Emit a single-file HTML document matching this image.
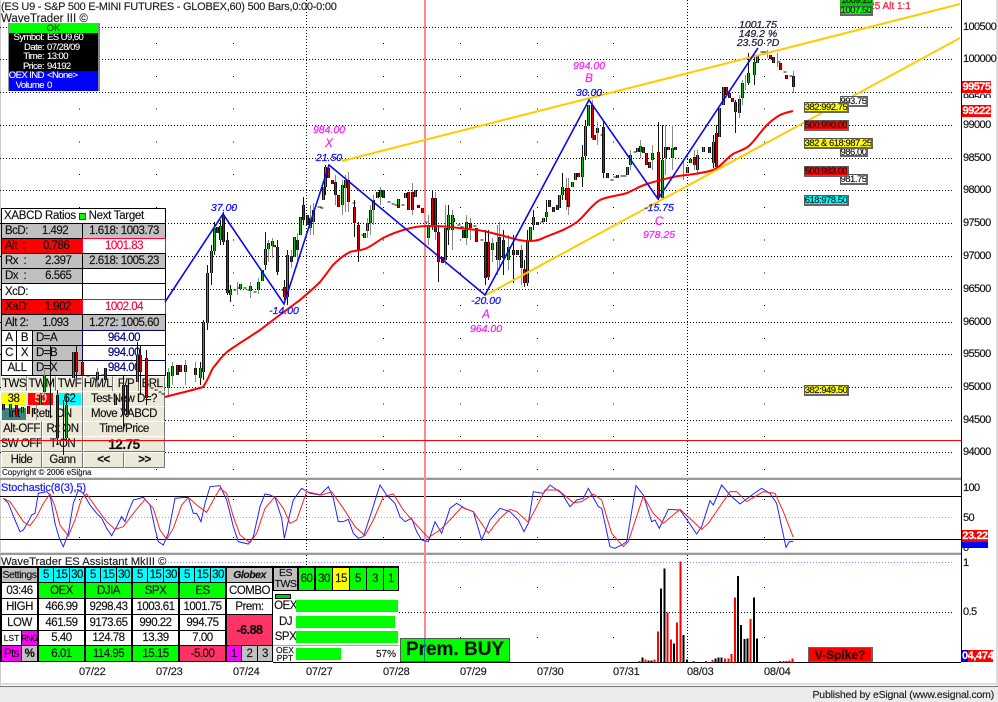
<!DOCTYPE html>
<html><head><meta charset="utf-8"><style>
html,body{margin:0;padding:0;background:#fff}
#p{position:relative;width:998px;height:702px;overflow:hidden;background:#fff;font-family:"Liberation Sans",sans-serif;color:#111}
svg{position:absolute;left:0;top:0}
.c,.t{position:absolute;white-space:nowrap;overflow:hidden}
.c{display:flex;align-items:center;justify-content:center;box-sizing:border-box;font-size:11.5px;letter-spacing:-.5px;-webkit-text-stroke:.15px currentColor}
.b{border:1px solid #000}
.g{background:#c0c0c0}
.w{background:#fff}
.btn{background:#ece9d8;border-top:1px solid #fff;border-left:1px solid #fff;border-right:1px solid #777;border-bottom:1px solid #777;font-size:11.5px}
.t{overflow:visible;line-height:12px;font-size:10.5px;transform:translateX(-50%);font-style:italic;-webkit-text-stroke:.25px currentColor}
.m{color:#ff20ff}.bl{color:#1010ff}
.l{font-size:9.5px;letter-spacing:-.5px;border:1px solid #555;border-right:2px solid #666;border-bottom:2px solid #666;color:#111}
.a{position:absolute;left:963px;font-size:11px;letter-spacing:-.6px;line-height:12px;-webkit-text-stroke:.15px #111}
.d{position:absolute;font-size:11px;top:666px;letter-spacing:-.2px;line-height:12px;color:#222;-webkit-text-stroke:.2px #222}
.pop{position:absolute;font-size:9.5px;letter-spacing:-.55px;line-height:10px;color:#fff;white-space:pre;-webkit-text-stroke:.1px #fff}
</style></head><body><div id="p">
<svg width="998" height="702" style="shape-rendering:crispEdges">
<rect x="0" y="0" width="1" height="702" fill="#ccc"/>
<g stroke="#000" stroke-dasharray="1 2" stroke-width="1" fill="none">
<path d="M0 27.5H953M0 59.5H953M0 92.5H953M0 125.5H953M0 158.5H953M0 190.5H953M0 223.5H953M0 256.5H953M0 289.5H953M0 322.5H953M0 354.5H953M0 387.5H953M0 420.5H953M0 452.5H953M399 612.5H953"/>
<path d="M306.5 0V662M687.5 0V662"/>
</g>
<g stroke="#000" stroke-dasharray="1 31.75" fill="none">
<path d="M79.5 43V470M156.5 43V470M233.5 43V470M383.5 43V470M460.5 43V470M537.5 43V470M613.5 43V470M764.5 43V470"/>
</g>
<g stroke="#000" stroke-dasharray="1 37" fill="none">
<path d="M79.5 499V540M156.5 499V540M233.5 499V540M383.5 499V540M460.5 499V540M537.5 499V540M613.5 499V540M764.5 499V540"/>
</g>
<g stroke="#000" stroke-dasharray="1 49" fill="none">
<path d="M233.5 587V640M383.5 587V640M460.5 587V640M537.5 587V640M613.5 587V640M764.5 587V640"/>
</g>
<path d="M165 562.5H953" stroke="#8888ff" stroke-dasharray="1 2"/>
<path d="M0 517.5H953" stroke="#aaa" stroke-dasharray="1 2"/>
<path d="M0 496.5H961M0 539.5H961" stroke="#000"/>
<rect x="0" y="477" width="961" height="1" fill="#ddd"/><rect x="0" y="478" width="961" height="2" fill="#999"/>
<rect x="0" y="552" width="961" height="1" fill="#ddd"/><rect x="0" y="553" width="961" height="2" fill="#999"/>
<path d="M399 662.5H961M961.5 0V662" stroke="#000"/>
<rect x="424" y="0" width="2" height="662" fill="#ff8888"/>
<rect x="0" y="683" width="998" height="2" fill="#ddd"/><rect x="0" y="686" width="998" height="1" fill="#777"/><rect x="0" y="687" width="998" height="15" fill="#ececec"/>
<rect x="996" y="0" width="2" height="686" fill="#ddd"/>
</svg>
<svg width="998" height="702">
<g transform="translate(0,470) scale(.33333)" fill="none" stroke-width="3">
<path stroke="#2424ff" d="M10 85L25 100 45 150 60 185 70 180 85 155 95 135 105 130 115 70 140 65 150 75 165 160 178 205 190 230 205 190 220 100 235 60 250 70 270 105 290 130 305 145 320 175 335 197 350 170 365 140 375 155 385 125 400 90 430 82 450 105 465 175 475 215 490 225 505 190 525 85 545 83 565 82 580 130 590 130 603 155 615 100 630 50 660 47 680 90 700 170 715 215 745 222 760 200 780 110 795 72 810 75 825 82 845 145 853 205 870 130 880 90 905 55 930 70 960 75 985 50 1000 85 1015 155 1030 155 1045 148 1060 190 1075 205 1090 200 1110 140 1140 45 1160 75 1185 100 1200 140 1215 155 1235 145 1250 185 1265 210 1285 215 1305 155 1325 190 1350 115 1370 100 1395 115 1420 125 1445 210 1470 150 1500 115 1530 125 1555 150 1572 185 1585 160 1600 65 1630 70 1650 45 1685 70 1710 110 1730 90 1750 85 1765 55 1795 110 1805 115 1830 230 1845 235 1865 225 1880 215 1908 47 1930 75 1955 155 1965 150 1978 175 2005 118 2040 120 2065 155 2090 192 2105 170 2130 92 2140 105 2165 45 2190 75 2220 102 2260 72 2285 55 2310 70 2330 100 2358 232 2368 215 2380 215"/>
<path stroke="#ff2020" d="M10 85L30 95 50 125 70 155 90 167 110 140 130 100 150 72 165 110 180 165 205 198 225 150 245 85 260 72 290 115 320 155 345 178 370 170 400 130 435 88 460 115 480 180 500 208 520 175 545 105 565 82 590 105 620 127 640 90 660 55 680 70 700 140 720 195 750 218 770 190 795 115 825 80 850 115 870 160 890 150 920 65 965 75 995 65 1030 115 1065 170 1095 197 1120 150 1150 80 1180 72 1210 120 1245 160 1285 203 1320 180 1350 150 1385 112 1420 125 1465 190 1500 145 1530 118 1550 125 1585 157 1610 110 1635 60 1675 60 1720 98 1745 95 1780 72 1805 90 1835 190 1870 230 1885 215 1930 78 1960 130 1990 160 2040 118 2105 178 2125 160 2190 65 2210 65 2240 95 2290 65 2325 70 2350 125 2380 202"/>
</g>
<g transform="translate(500,470) scale(.33333)" fill="none" stroke-width="6" style="shape-rendering:crispEdges">
<path stroke="#ff0000" d="M418 577V573M436 577V569M464 577V568M474 577V484M503 577V428M513 577V508M531 577V457M541 577V275M580 577V573M618 577V573M637 577V570M675 577V565M685 577V565M695 577V552M705 577V382M752 577V447M840 577V573M850 577V573M860 577V573M868 577V572M877 577V565"/>
<path stroke="#000" d="M427 577V563M445 577V571M454 577V571M483 577V355M493 577V295M522 577V520M551 577V495M561 577V568M647 577V565M655 577V562M665 577V563M714 577V318M723 577V465M733 577V507M743 577V505M762 577V382M771 577V505"/>
</g>
</svg>

<div class="c" style="left:1px;top:0;font-size:11px;letter-spacing:-.25px;height:13px;justify-content:flex-start;width:345px;color:#222">(ES U9 - S&amp;P 500 E-MINI FUTURES - GLOBEX,60) 500 Bars,0:00-0:00</div>
<div class="c" style="left:1px;top:12px;font-size:11.5px;letter-spacing:0;height:14px;justify-content:flex-start;width:90px;color:#222">WaveTrader III ©</div>
<div class="c" style="left:1px;top:481px;font-size:11px;letter-spacing:-.1px;height:14px;justify-content:flex-start;width:90px;color:#2424ff;-webkit-text-stroke:.25px #2424ff">Stochastic(8(3),5)</div>
<div class="c" style="left:1px;top:556px;font-size:11.2px;letter-spacing:0;height:11px;justify-content:flex-start;width:168px;color:#222;align-items:flex-start">WaveTrader ES Assistant MkIII ©</div>

<!-- popup -->
<div style="position:absolute;left:8px;top:23px;width:92px;height:68px;background:#000;border:1px solid #999;border-right:2px solid #888;border-bottom:2px solid #888;box-sizing:border-box">
<div style="position:absolute;left:0;top:0;right:0;height:9px;background:#00ff00;color:#111;font-size:9.5px;line-height:9px;text-align:center;overflow:hidden">OK</div>
<div style="position:absolute;left:0;top:47px;right:0;height:20px;background:#0000ff"></div>
</div>
<div class="pop" style="left:0;top:33px;width:44px;text-align:right">Symbol:</div><div class="pop" style="left:47px;top:33px">ES U9,60</div>
<div class="pop" style="left:0;top:43px;width:44px;text-align:right">Date:</div><div class="pop" style="left:47px;top:43px">07/28/09</div>
<div class="pop" style="left:0;top:52px;width:44px;text-align:right">Time:</div><div class="pop" style="left:47px;top:52px">13:00</div>
<div class="pop" style="left:0;top:62px;width:44px;text-align:right">Price:</div><div class="pop" style="left:47px;top:62px">94192</div>
<div class="pop" style="left:0;top:71px;width:44px;text-align:right">OEX IND</div><div class="pop" style="left:47px;top:71px">&lt;None&gt;</div>
<div class="pop" style="left:0;top:81px;width:44px;text-align:right">Volume</div><div class="pop" style="left:47px;top:81px">0</div>

<!-- left panel -->
<div class="c b w" style="left:1px;top:208px;width:165px;height:16px;justify-content:flex-start;padding-left:2px;font-size:11.5px;letter-spacing:-.3px">XABCD Ratios&nbsp;<span style="display:inline-block;width:5px;height:5px;background:#00ff00;border:1px solid #060"></span>&nbsp;Next Target</div>
<div class="c g b" style="left:1px;top:223px;width:82px;height:16px;justify-content:flex-start;padding-left:3px;word-spacing:0">BcD:<span style="margin-left:14px">1.492</span></div><div class="c g b" style="left:82px;top:223px;width:84px;height:16px">1.618: 1003.73</div>
<div class="c b" style="left:1px;top:238px;width:82px;height:16px;background:#f00;justify-content:flex-start;padding-left:3px">Alt&nbsp;&nbsp;:<span style="margin-left:18px">0.786</span></div><div class="c w" style="left:82px;top:238px;width:84px;height:16px;border:1px solid #f03;color:#ff0040">1001.83</div>
<div class="c g b" style="left:1px;top:253px;width:82px;height:16px;justify-content:flex-start;padding-left:3px">Rx&nbsp;&nbsp;:<span style="margin-left:19px">2.397</span></div><div class="c g b" style="left:82px;top:253px;width:84px;height:16px">2.618: 1005.23</div>
<div class="c g b" style="left:1px;top:268px;width:82px;height:16px;justify-content:flex-start;padding-left:3px">Dx&nbsp;&nbsp;:<span style="margin-left:19px">6.565</span></div><div class="c w b" style="left:82px;top:268px;width:84px;height:16px"></div>
<div class="c w b" style="left:1px;top:283px;width:82px;height:17px;justify-content:flex-start;padding-left:3px">XcD:</div><div class="c w b" style="left:82px;top:283px;width:84px;height:17px"></div>
<div class="c b" style="left:1px;top:299px;width:82px;height:16px;background:#f00;justify-content:flex-start;padding-left:3px">XaD:<span style="margin-left:16px">1.902</span></div><div class="c w" style="left:82px;top:299px;width:84px;height:16px;border:1px solid #f03;color:#ff0040">1002.04</div>
<div class="c g b" style="left:1px;top:314px;width:82px;height:17px;justify-content:flex-start;padding-left:3px">Alt 2:<span style="margin-left:14px">1.093</span></div><div class="c g b" style="left:82px;top:314px;width:84px;height:17px">1.272: 1005.60</div>
<div class="c w b" style="left:1px;top:330px;width:16px;height:16px">A</div><div class="c w b" style="left:16px;top:330px;width:17px;height:16px">B</div><div class="c g b" style="left:32px;top:330px;width:51px;height:16px;justify-content:flex-start;padding-left:3px">D=A</div><div class="c w" style="left:82px;top:330px;width:84px;height:16px;border:1px solid #006;color:#000080">964.00</div>
<div class="c w b" style="left:1px;top:345px;width:16px;height:16px">C</div><div class="c w b" style="left:16px;top:345px;width:17px;height:16px">X</div><div class="c g b" style="left:32px;top:345px;width:51px;height:16px;justify-content:flex-start;padding-left:3px">D=B</div><div class="c w" style="left:82px;top:345px;width:84px;height:16px;border:1px solid #006;color:#000080">994.00</div>
<div class="c w b" style="left:1px;top:360px;width:32px;height:16px">ALL</div><div class="c g b" style="left:32px;top:360px;width:51px;height:16px;justify-content:flex-start;padding-left:3px">D=X</div><div class="c w" style="left:82px;top:360px;width:84px;height:16px;border:1px solid #006;color:#000080">984.00</div>
<div class="c btn" style="left:1px;top:376px;width:26px;height:16px">TWS</div><div class="c btn" style="left:27px;top:376px;width:29px;height:16px">TWM</div><div class="c btn" style="left:56px;top:376px;width:27px;height:16px">TWF</div><div class="c btn" style="left:83px;top:376px;width:30px;height:16px">H/M/L</div><div class="c btn" style="left:113px;top:376px;width:26px;height:16px">F/P</div><div class="c btn" style="left:139px;top:376px;width:26px;height:16px">BRL</div>
<div class="c btn" style="left:0;top:391px;width:83px;height:16px"></div>
<div class="c" style="left:1px;top:393px;width:25px;height:12px;background:#ff0">38</div><div class="c" style="left:28px;top:393px;width:25px;height:12px;background:#f00;color:#fff">50</div><div class="c" style="left:58px;top:393px;width:23px;height:12px;background:#0ff">62</div>
<div class="c btn" style="left:83px;top:391px;width:82px;height:16px">Test New D=?</div>
<div class="c btn" style="left:0;top:406px;width:83px;height:16px;justify-content:flex-start;padding-left:30px">Retr. ON</div><div class="c" style="left:2px;top:408px;width:24px;height:12px;background:#408080;color:#000">Int</div>
<div class="c btn" style="left:83px;top:406px;width:82px;height:16px">Move XABCD</div>
<div class="c btn" style="left:1px;top:421px;width:41px;height:16px">Alt-OFF</div><div class="c btn" style="left:42px;top:421px;width:41px;height:16px">Rx ON</div><div class="c btn" style="left:83px;top:421px;width:82px;height:16px">Time/Price</div>
<div class="c btn" style="left:1px;top:436px;width:41px;height:16px">SW OFF</div><div class="c btn" style="left:42px;top:436px;width:41px;height:16px">T-ON</div><div class="c btn" style="left:83px;top:436px;width:82px;height:16px;font-weight:bold;font-size:13.5px">12.75</div>
<div class="c btn" style="left:1px;top:452px;width:41px;height:16px">Hide</div><div class="c btn" style="left:42px;top:452px;width:41px;height:16px">Gann</div><div class="c btn" style="left:83px;top:452px;width:41px;height:16px;font-weight:bold">&lt;&lt;</div><div class="c btn" style="left:124px;top:452px;width:41px;height:16px;font-weight:bold">&gt;&gt;</div>
<div class="c" style="left:2px;top:468px;width:90px;height:9px;font-size:8px;letter-spacing:0;justify-content:flex-start;color:#222">Copyright © 2006 eSignal</div>

<svg width="998" height="702">
<g fill="none" transform="translate(.5,0)" style="shape-rendering:crispEdges">
<path stroke="#888" d="M36 405V420M44 370V398M97 368V388M168 368V395M172 362V385M185 360V385M195 362V382M237 282V295M250 282V298M258 278V294M268 240V262M272 238V258M291 250V268M297 233V262M310 205V235M313 203V235M335 175V205M342 180V215M345 175V212M348 172V212M367 218V238M370 205V235M373 195V225M380 187V205M412 183V215M428 215V245M435 192V240M445 205V265M452 210V250M466 215V245M470 218V240M492 238V262M497 225V275M499 222V270M508 235V270M521 245V285M566 178V210M568 178V215M592 100V140M597 122V145M630 150V170M640 140V158M652 145V170M665 125V175M672 125V170M683 160V180M694 150V170M697 150V175M739 95V118M742 80V105M745 75V90M793 71V93M777 53V67M767 50V58"/>
<path stroke="#111" d="M50 345V418M57 390V445M63 400V455M66 395V445M76 345V378M123 375V430M137 342V382M140 345V395M146 350V405M200 362V385M203 320V380M207 265V330M211 245V285M214 222V255M220 220V245M223 212V245M227 232V295M230 285V302M265 232V270M277 240V275M284 280V300M287 250V305M303 197V225M325 165V195M354 200V237M358 222V262M432 190V230M438 225V282M448 205V245M485 230V285M488 230V280M503 230V275M513 235V283M524 260V287M527 230V286M533 210V230M546 200V222M562 173V200M582 145V187M585 120V160M603 120V178M658 122V200M662 125V200M713 135V168M716 125V170M735 100V133M748 53V85M754 55V85M86 376h3M91 378h3M101 375h3M109 398h3M150 388h3M154 390h3M158 392h3M161 394h3M233 290h3M237 288h3M243 288h3M247 290h3M253 292h3M281 290h3M317 207h4M320 208h3M352 203h3M361 235h3M387 202h3M391 204h3M394 205h3M401 205h3M425 222h2M457 225h3M460 227h3M473 226h3M480 240h3M540 222h3M600 135h2M610 180h3M613 177h3M620 176h3M623 176h3M633 152h3M760 52h3M763 52h3M767 53h3M777 62h3M783 72h3M789 76h3"/>
<defs>
<path id="gg" d="M10 404V410M22 407V413M33 408V414M40 395V405M44 375V392M66 405V438M73 352V378M97 372V380M115 395V405M137 355V382M168 372V388M172 366V376M185 365V372M200 368V378M203 322V372M207 273V323M211 251V273M214 228V251M220 226V240M230 290V295M240 284V289M250 286V291M258 282V290M262 270V281M265 249V265M268 243V249M272 241V246M287 255V297M294 237V257M300 217V235M310 218V228M313 210V222M323 187V200M325 167V187M342 185V205M345 180V188M364 233V238M367 223V231M370 210V223M373 200V210M377 192V198M380 190V197M398 199V206M405 193V198M415 190V197M428 225V238M445 228V260M448 215V230M452 215V230M466 222V238M492 243V250M497 242V260M508 247V260M527 240V283M530 227V240M533 217V225M543 218V222M546 212V217M559 195V208M562 187V195M572 182V187M575 173V180M582 157V177M585 126V156M588 105V126M597 128V133M617 175V178M627 167V175M630 155V165M637 148V152M640 146V152M652 153V160M662 160V198M665 147V158M672 148V158M687 167V173M690 159V163M697 155V170M703 147V152M713 142V163M719 108V137M723 87V105M739 99V113M742 83V98M748 73V83M754 62V75M757 55V63"/>
<path id="rr" d="M3 404V410M16 405V415M28 406V414M57 395V438M76 352V372M82 362V375M105 368V380M123 385V415M127 385V415M140 355V372M146 358V398M177 365V375M180 365V372M195 368V375M217 227V233M223 215V242M227 240V293M274 245V247M277 247V272M284 287V297M291 256V262M297 240V250M303 205V220M307 215V225M328 168V178M332 180V184M335 182V195M338 195V207M348 180V202M354 207V223M358 225V250M383 190V198M398 205V208M408 192V210M412 192V210M418 205V208M422 208V213M432 198V225M435 198V232M438 232V262M442 257V263M453 218V222M463 230V238M470 223V228M476 228V242M485 242V278M488 242V277M499 237V260M503 240V258M513 250V255M517 250V255M521 250V268M524 269V283M537 222V225M549 200V207M553 207V212M557 205V210M566 188V200M568 188V207M578 173V177M592 105V138M594 135V140M603 127V173M607 173V178M643 147V153M646 153V165M649 162V168M658 152V198M668 147V150M675 147V150M694 157V165M709 147V153M716 133V167M726 87V95M729 93V98M732 98V102M735 102V112M770 55V59M773 57V63M780 63V70M786 75V79M793 76V87"/>
</defs>
<use href="#gg" stroke="#111" stroke-width="3"/><use href="#rr" stroke="#111" stroke-width="3"/>
<use href="#gg" stroke="#00c000" stroke-width="1"/><use href="#rr" stroke="#e00000" stroke-width="1"/>
</g>
<path d="M165 397C175 394 190 391 203 387C208 380 210 373 213 368C218 362 222 356 227 352C232 348 236 346 240 343C248 338 254 334 260 330L277 317C285 311 292 306 300 300C307 294 314 288 320 282C325 276 329 270 333 265C339 259 344 255 350 252C356 250 361 251 367 248C373 245 378 241 383 238C391 234 399 231 407 229C414 227 420 226 427 226C435 226 443 226 450 227C459 228 468 229 477 230C485 231 492 233 500 235C509 237 518 241 527 241C533 241 538 241 543 238C555 233 566 230 577 222C585 216 591 205 600 200C608 196 618 196 627 193C634 190 640 186 647 184C656 181 665 179 673 177C682 175 691 175 700 173C706 172 712 171 717 168C723 164 727 158 733 154C738 151 745 150 750 145C756 139 761 131 767 125C771 121 775 118 780 115C784 113 789 112 793 111" fill="none" stroke="#f00" stroke-width="2"/>
<path d="M342 161L960 4M486 295L960 38" fill="none" stroke="#ffcc00" stroke-width="2"/>
<path d="M165 302L223 214 284 304 329 165 485 295 589 100 658 199 758 48" fill="none" stroke="#0a0af0" stroke-width="1.6"/>
<rect x="0" y="440" width="961" height="1" fill="#f00" style="shape-rendering:crispEdges"/>
</svg>

<!-- chart labels -->
<div class="t m" style="left:329px;top:124px">984.00</div><div class="t m" style="left:329px;top:138px;font-size:11.5px">X</div><div class="t bl" style="left:329px;top:152px">21.50</div>
<div class="t bl" style="left:224px;top:202px">37.00</div><div class="t bl" style="left:284px;top:305px">-14.00</div>
<div class="t m" style="left:589px;top:60px">994.00</div><div class="t m" style="left:589px;top:73px;font-size:11.5px">B</div><div class="t bl" style="left:589px;top:87px">30.00</div>
<div class="t bl" style="left:486px;top:295px">-20.00</div><div class="t m" style="left:486px;top:309px;font-size:11.5px">A</div><div class="t m" style="left:486px;top:323px">964.00</div>
<div class="t bl" style="left:659px;top:202px">-15.75</div><div class="t m" style="left:659px;top:216px;font-size:11.5px">C</div><div class="t m" style="left:659px;top:229px">978.25</div>
<div class="t" style="left:758px;top:19px;color:#224">1001.75</div><div class="t" style="left:758px;top:28px;color:#224">149.2 %</div><div class="t" style="left:758px;top:37px;color:#224">23.50 ?D</div>

<div class="t" style="left:890px;top:1px;font-style:normal;color:#ff2040;font-size:10px">25 Alt 1:1</div>
<div class="c" style="left:840px;top:0;width:33px;height:6px;background:#0c0;font-size:9.5px;align-items:flex-end">1009.25</div>
<div class="c l" style="left:840px;top:6px;width:33px;height:10px;background:#00ff00">1007.50</div>
<div class="c l" style="left:840px;top:96px;width:28px;height:11px;background:#fff">993.75</div>
<div class="c l" style="left:804px;top:102px;width:45px;height:11px;background:#ff0">382:992.75</div>
<div class="c l" style="left:804px;top:120px;width:45px;height:11px;background:#f00">500:990.00</div>
<div class="c l" style="left:840px;top:148px;width:28px;height:9px;background:#fff">986.00</div>
<div class="c l" style="left:804px;top:138px;width:69px;height:11px;background:#ff0">382 &amp; 618:987.25</div>
<div class="c l" style="left:840px;top:174px;width:28px;height:11px;background:#fff">981.75</div>
<div class="c l" style="left:804px;top:166px;width:45px;height:11px;background:#f00">500:983.00</div>
<div class="c l" style="left:804px;top:195px;width:45px;height:11px;background:#0ff">618:978.50</div>
<div class="c l" style="left:804px;top:385px;width:45px;height:11px;background:#ff0">382:949.50</div>

<!-- axis -->
<div class="a" style="top:21px">100500</div><div class="a" style="top:53px">100000</div><div class="a" style="top:119px">99000</div><div class="a" style="top:152px">98500</div><div class="a" style="top:184px">98000</div><div class="a" style="top:217px">97500</div><div class="a" style="top:250px">97000</div><div class="a" style="top:283px">96500</div><div class="a" style="top:316px">96000</div><div class="a" style="top:348px">95500</div><div class="a" style="top:381px">95000</div><div class="a" style="top:414px">94500</div><div class="a" style="top:446px">94000</div>
<div class="a" style="top:92px;height:6px;overflow:hidden">99500</div>
<div class="c" style="left:962px;top:81px;width:29px;height:12px;background:#f00;color:#fff;font-size:11px;letter-spacing:-.5px;font-weight:bold">99575</div>
<div class="c" style="left:962px;top:105px;width:29px;height:12px;background:#f00;color:#fff;font-size:11px;letter-spacing:-.5px;font-weight:bold">99222</div>
<div class="a" style="top:482px">100</div><div class="a" style="top:512px">50</div><div class="a" style="top:542px">0</div>
<div class="c" style="left:962px;top:541px;width:26px;height:7px;background:#0000ff"></div>
<div class="c" style="left:962px;top:530px;width:26px;height:12px;background:#f00;color:#fff;font-size:11px;letter-spacing:-.4px;font-weight:bold">23.22</div>
<div class="a" style="top:557px">1</div><div class="a" style="top:606px">0.5</div>
<div class="c" style="left:962px;top:650px;width:6px;height:12px;background:#0000ff;color:#fff;font-size:11px;font-weight:bold;justify-content:flex-start;overflow:hidden">0</div>
<div class="c" style="left:968px;top:650px;width:25px;height:12px;background:#f00;color:#fff;font-size:11px;letter-spacing:-.3px;font-weight:bold">4,474</div>
<div class="c" style="left:808px;top:647px;width:65px;height:15px;background:#f00;border:1px solid #666;border-right:2px solid #666;font-size:12px;letter-spacing:0;font-weight:bold;color:#220000">V-Spike?</div>

<!-- dates -->
<div class="d" style="left:79px">07/22</div><div class="d" style="left:156px">07/23</div><div class="d" style="left:233px">07/24</div><div class="d" style="left:306px">07/27</div><div class="d" style="left:383px">07/28</div><div class="d" style="left:460px">07/29</div><div class="d" style="left:537px">07/30</div><div class="d" style="left:613px">07/31</div><div class="d" style="left:687px">08/03</div><div class="d" style="left:764px">08/04</div>
<div class="c" style="left:800px;top:688px;width:194px;height:13px;justify-content:flex-end;font-size:10.5px;letter-spacing:-.2px;color:#222">Published by eSignal (www.esignal.com)</div>

<!-- bottom table -->
<div style="position:absolute;left:0;top:566px;width:399px;height:96px;background:#000"></div>
<div class="c g b" style="left:1px;top:567px;width:37px;height:16px;font-size:10.5px">Settings</div>
<div class="c b" style="left:38px;top:567px;width:16px;height:16px;background:#0ff">5</div><div class="c b" style="left:53px;top:567px;width:17px;height:16px;background:#0ff">15</div><div class="c b" style="left:69px;top:567px;width:16px;height:16px;background:#0ff">30</div>
<div class="c b" style="left:85px;top:567px;width:16px;height:16px;background:#0ff">5</div><div class="c b" style="left:100px;top:567px;width:17px;height:16px;background:#0ff">15</div><div class="c b" style="left:116px;top:567px;width:16px;height:16px;background:#0ff">30</div>
<div class="c b" style="left:132px;top:567px;width:16px;height:16px;background:#0ff">5</div><div class="c b" style="left:147px;top:567px;width:17px;height:16px;background:#0ff">15</div><div class="c b" style="left:163px;top:567px;width:16px;height:16px;background:#0ff">30</div>
<div class="c b" style="left:179px;top:567px;width:16px;height:16px;background:#0ff">5</div><div class="c b" style="left:194px;top:567px;width:17px;height:16px;background:#0ff">15</div><div class="c b" style="left:210px;top:567px;width:16px;height:16px;background:#0ff">30</div>
<div class="c g b" style="left:226px;top:567px;width:47px;height:16px;font-style:italic;font-weight:bold;font-size:10.5px">Globex</div>
<div class="c g b" style="left:273px;top:567px;width:25px;height:24px;font-size:10.5px;line-height:11px;text-align:center;white-space:normal">ES<br>TWS</div>
<div class="c b" style="left:298px;top:567px;width:17px;height:24px;background:#0f0">60</div><div class="c b" style="left:315px;top:567px;width:18px;height:24px;background:#0f0">30</div><div class="c b" style="left:332px;top:567px;width:18px;height:24px;background:#ff0">15</div><div class="c b" style="left:349px;top:567px;width:18px;height:24px;background:#0f0">5</div><div class="c b" style="left:366px;top:567px;width:18px;height:24px;background:#0f0">3</div><div class="c b" style="left:383px;top:567px;width:16px;height:24px;background:#0f0">1</div>
<div class="c w b" style="left:1px;top:582px;width:37px;height:17px;font-size:11.5px">03:46</div>
<div class="c b" style="left:38px;top:582px;width:47px;height:17px;background:#0f0">OEX</div><div class="c b" style="left:85px;top:582px;width:47px;height:17px;background:#0f0">DJIA</div><div class="c b" style="left:132px;top:582px;width:47px;height:17px;background:#0f0">SPX</div><div class="c b" style="left:179px;top:582px;width:47px;height:17px;background:#0f0">ES</div>
<div class="c w b" style="left:226px;top:582px;width:47px;height:17px">COMBO</div>
<div class="c w b" style="left:1px;top:598px;width:37px;height:17px">HIGH</div><div class="c w b" style="left:38px;top:598px;width:47px;height:17px">466.99</div><div class="c w b" style="left:85px;top:598px;width:47px;height:17px">9298.43</div><div class="c w b" style="left:132px;top:598px;width:47px;height:17px">1003.61</div><div class="c w b" style="left:179px;top:598px;width:47px;height:17px">1001.75</div><div class="c w b" style="left:226px;top:598px;width:47px;height:17px">Prem:</div>
<div class="c w b" style="left:1px;top:614px;width:37px;height:17px">LOW</div><div class="c w b" style="left:38px;top:614px;width:47px;height:17px">461.59</div><div class="c w b" style="left:85px;top:614px;width:47px;height:17px">9173.65</div><div class="c w b" style="left:132px;top:614px;width:47px;height:17px">990.22</div><div class="c w b" style="left:179px;top:614px;width:47px;height:17px">994.75</div>
<div class="c b" style="left:226px;top:614px;width:47px;height:32px;background:#ff3366;font-weight:bold;font-size:12.5px">-6.88</div>
<div class="c w b" style="left:1px;top:630px;width:21px;height:16px;font-size:8.5px;letter-spacing:0">LST</div><div class="c b" style="left:21px;top:630px;width:17px;height:16px;background:#f0f;font-size:8px">RNG</div>
<div class="c w b" style="left:38px;top:630px;width:47px;height:16px">5.40</div><div class="c w b" style="left:85px;top:630px;width:47px;height:16px">124.78</div><div class="c w b" style="left:132px;top:630px;width:47px;height:16px">13.39</div><div class="c w b" style="left:179px;top:630px;width:47px;height:16px">7.00</div>
<div class="c b" style="left:1px;top:645px;width:21px;height:17px;background:#f0f">Pts</div><div class="c g b" style="left:21px;top:645px;width:17px;height:17px;font-weight:bold">%</div>
<div class="c b" style="left:38px;top:645px;width:47px;height:17px;background:#0f0">6.01</div><div class="c b" style="left:85px;top:645px;width:47px;height:17px;background:#0f0">114.95</div><div class="c b" style="left:132px;top:645px;width:47px;height:17px;background:#0f0">15.15</div><div class="c b" style="left:179px;top:645px;width:47px;height:17px;background:#ff3366">-5.00</div>
<div class="c b" style="left:226px;top:645px;width:16px;height:17px;background:#f0f">1</div><div class="c g b" style="left:241px;top:645px;width:17px;height:17px">2</div><div class="c g b" style="left:257px;top:645px;width:16px;height:17px">3</div>
<div style="position:absolute;left:273px;top:591px;width:126px;height:71px;background:#fff;border-bottom:1px solid #000"></div>
<div style="position:absolute;left:275px;top:594px;width:16px;height:5px;background:#0c0;border:1px solid #000;box-sizing:border-box"></div>
<div class="c" style="left:273px;top:599px;width:25px;height:14px">OEX</div><div style="position:absolute;left:296px;top:600px;width:102px;height:12px;background:#0f0"></div>
<div class="c" style="left:273px;top:615px;width:25px;height:14px">DJ</div><div style="position:absolute;left:296px;top:616px;width:99px;height:12px;background:#0f0"></div>
<div class="c" style="left:273px;top:630px;width:25px;height:14px">SPX</div><div style="position:absolute;left:296px;top:631px;width:102px;height:12px;background:#0f0"></div>
<div style="position:absolute;left:273px;top:645px;width:126px;height:1px;background:#aaa"></div>
<div class="c" style="left:273px;top:646px;width:24px;height:15px;font-size:8.5px;letter-spacing:0;line-height:8px;text-align:center;white-space:normal">OEX<br>PPT</div><div style="position:absolute;left:296px;top:648px;width:45px;height:12px;background:#0f0"></div>
<div class="c" style="left:375px;top:648px;width:22px;height:13px;font-size:10px;letter-spacing:0">57%</div>
<div class="c" style="left:400px;top:638px;width:110px;height:24px;background:#00ff00;border:1px solid #555;font-weight:bold;font-size:19px;letter-spacing:0;color:#111">Prem. BUY</div>
<div style="position:absolute;left:424px;top:638px;width:1px;height:24px;background:#0a7a7a"></div>
</div></body></html>
